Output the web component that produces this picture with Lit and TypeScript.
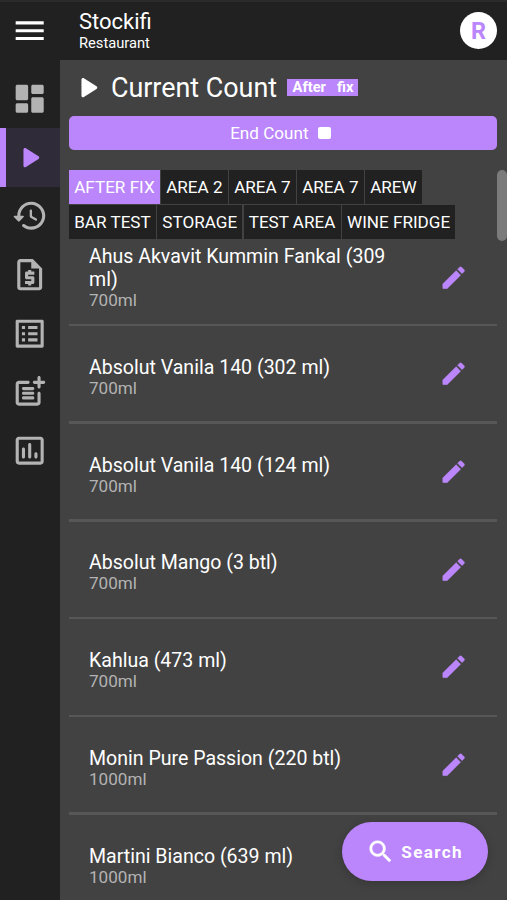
import { LitElement, html, css, svg } from "lit";
import { customElement, property } from "lit/decorators.js";
import { classMap } from "lit/directives/class-map.js";

const ICONS: Record<string, string> = {
  menu: "M3 18h18v-2H3v2zm0-5h18v-2H3v2zm0-7v2h18V6H3z",
  dashboard:
    "M4 13h6c.55 0 1-.45 1-1V4c0-.55-.45-1-1-1H4c-.55 0-1 .45-1 1v8c0 .55.45 1 1 1zm0 8h6c.55 0 1-.45 1-1v-4c0-.55-.45-1-1-1H4c-.55 0-1 .45-1 1v4c0 .55.45 1 1 1zm10 0h6c.55 0 1-.45 1-1v-8c0-.55-.45-1-1-1h-6c-.55 0-1 .45-1 1v8c0 .55.45 1 1 1zM13 4v4c0 .55.45 1 1 1h6c.55 0 1-.45 1-1V4c0-.55-.45-1-1-1h-6c-.55 0-1 .45-1 1z",
  play: "M8 6.82v10.36c0 .79.87 1.27 1.54.84l8.14-5.18c.62-.39.62-1.29 0-1.69L9.54 5.98C8.87 5.55 8 6.03 8 6.82z",
  history:
    "M13.26 3C8.17 2.86 4 6.95 4 12H2.21c-.45 0-.67.54-.35.85l2.79 2.8c.2.2.51.2.71 0l2.79-2.8c.31-.31.09-.85-.36-.85H6c0-3.9 3.18-7.05 7.1-7 3.72.05 6.85 3.18 6.9 6.9.05 3.91-3.1 7.1-7 7.1-1.61 0-3.1-.55-4.28-1.48-.4-.31-.96-.28-1.32.08-.42.42-.39 1.13.08 1.49C9 20.29 10.91 21 13 21c5.05 0 9.14-4.17 9-9.26-.13-4.69-4.05-8.61-8.74-8.74zm-.51 5c-.41 0-.75.34-.75.75v3.68c0 .35.19.68.49.86l3.12 1.85c.36.21.82.09 1.03-.26.21-.36.09-.82-.26-1.03l-2.88-1.71v-3.4c0-.4-.34-.74-.75-.74z",
  quote:
    "M14 2H6c-1.1 0-2 .9-2 2v16c0 1.1.89 2 1.99 2H18c1.1 0 2-.9 2-2V8l-6-6zm4 18H6V4h7v4h5v12zM11 19h2v-1h1c.55 0 1-.45 1-1v-3c0-.55-.45-1-1-1h-3v-1h4v-2h-2V9h-2v1h-1c-.55 0-1 .45-1 1v3c0 .55.45 1 1 1h3v1H9v2h2v1z",
  list: "M19 5v14H5V5h14m1.1-2H3.9c-.5 0-.9.4-.9.9v16.2c0 .4.4.9.9.9h16.2c.4 0 .9-.5.9-.9V3.9c0-.5-.5-.9-.9-.9zM11 7h6v2h-6V7zm0 4h6v2h-6v-2zm0 4h6v2h-6v-2zM7 7h2v2H7V7zm0 4h2v2H7v-2zm0 4h2v2H7v-2z",
  postAdd:
    "M17 19H5V7h6c.55 0 1-.45 1-1s-.45-1-1-1H5c-1.1 0-2 .9-2 2v12c0 1.1.9 2 2 2h12c1.1 0 2-.9 2-2v-6c0-.55-.45-1-1-1s-1 .45-1 1v6zM19 3c0-.55-.45-1-1-1s-1 .45-1 1v2h-2c-.55 0-1 .45-1 1s.45 1 1 1h2v2c0 .55.45 1 1 1s1-.45 1-1V7h2c.55 0 1-.45 1-1s-.45-1-1-1h-2V3zM8 9h6c.55 0 1 .45 1 1s-.45 1-1 1H8c-.55 0-1-.45-1-1s.45-1 1-1zM8 12h6c.55 0 1 .45 1 1s-.45 1-1 1H8c-.55 0-1-.45-1-1s.45-1 1-1zM8 15h6c.55 0 1 .45 1 1s-.45 1-1 1H8c-.55 0-1-.45-1-1s.45-1 1-1z",
  chart:
    "M19 3H5c-1.1 0-2 .9-2 2v14c0 1.1.9 2 2 2h14c1.1 0 2-.9 2-2V5c0-1.1-.9-2-2-2zm0 16H5V5h14v14zM8 10c.55 0 1 .45 1 1v5c0 .55-.45 1-1 1s-1-.45-1-1v-5c0-.55.45-1 1-1zM12 7c.55 0 1 .45 1 1v8c0 .55-.45 1-1 1s-1-.45-1-1V8c0-.55.45-1 1-1zM16 13c.55 0 1 .45 1 1v2c0 .55-.45 1-1 1s-1-.45-1-1v-2c0-.55.45-1 1-1z",
  edit: "M3 17.46v3.04c0 .28.22.5.5.5h3.04c.13 0 .26-.05.35-.15L17.81 9.94l-3.75-3.75L3.15 17.1c-.1.1-.15.22-.15.36zM20.71 7.04c.39-.39.39-1.02 0-1.41l-2.34-2.34c-.39-.39-1.02-.39-1.41 0l-1.83 1.83 3.75 3.75 1.83-1.83z",
  search:
    "M15.5 14h-.79l-.28-.27C15.41 12.59 16 11.11 16 9.5 16 5.91 13.09 3 9.5 3S3 5.91 3 9.5 5.91 16 9.5 16c1.61 0 3.09-.59 4.23-1.57l.27.28v.79l5 4.99L20.49 19l-4.99-5zm-6 0C7.01 14 5 11.99 5 9.5S7.01 5 9.5 5 14 7.01 14 9.5 11.99 14 9.5 14z",
};

@customElement("ui-icon")
export class UiIcon extends LitElement {
  @property() name = "menu";
  static styles = css`
    :host { display: block; width: 37.4px; height: 37.4px; flex: none; }
    .glyph { display: block; width: 100%; height: 100%; fill: currentColor; stroke: currentColor; stroke-width: var(--icon-stroke, 0); }
  `;
  render() {
    return html`<svg class="glyph" viewBox="0 0 24 24">${svg`<path fill-rule="evenodd" d=${ICONS[this.name]}></path>`}</svg>`;
  }
}

@customElement("app-root")
export class AppRoot extends LitElement {
  nav = ["dashboard", "play", "history", "quote", "list", "postAdd", "chart"];
  areas = [
    ["AFTER FIX", "AREA 2", "AREA 7", "AREA 7", "AREW"],
    ["BAR TEST", "STORAGE", "TEST AREA", "WINE FRIDGE"],
  ];
  items = [
    ["Ahus Akvavit Kummin Fankal (309 ml)", "700ml"],
    ["Absolut Vanila 140 (302 ml)", "700ml"],
    ["Absolut Vanila 140 (124 ml)", "700ml"],
    ["Absolut Mango (3 btl)", "700ml"],
    ["Kahlua (473 ml)", "700ml"],
    ["Monin Pure Passion (220 btl)", "1000ml"],
    ["Martini Bianco (639 ml)", "1000ml"],
  ];

  static styles = css`
    :host {
      display: flex; flex-direction: column; position: relative;
      width: 507px; height: 900px; overflow: hidden; box-sizing: border-box;
      background: #424242; color: #fff; font-family: Roboto, sans-serif;
    }
    .header {
      display: flex; align-items: center; height: 60px; flex: none; box-sizing: border-box;
      background: #212121; border-top: 2px solid #2b2b2b; padding: 0 10px 0 11.3px;
    }
    .header ui-icon, .avatar { margin-top: -1px; }
    .brand { flex: 1; margin-left: 30.3px; }
    .name { font-size: 22px; line-height: 24.5px; }
    .kind { font-size: 14.7px; line-height: 17px; }
    .avatar {
      width: 37px; height: 37px; border-radius: 50%; background: #fff; color: #bb86fc;
      display: flex; align-items: center; justify-content: center;
      font-size: 23.5px; font-weight: 700;
    }
    .body { display: flex; flex: 1; min-height: 0; }
    .rail { width: 60px; flex: none; background: #212121; padding-top: 9.3px; box-sizing: border-box; color: #b3b3b3; }
    .nav { height: 58.67px; display: flex; align-items: center; justify-content: center; box-sizing: border-box; padding-left: 0.3px; }
    .nav.active {
      background: #302b38; color: #bb86fc; border-left: 6px solid #bb86fc; padding: 0 5.7px 0 0;
    }
    .main { flex: 1; min-width: 0; display: flex; flex-direction: column; padding: 0 0 0 9.2px; }
    .title { display: flex; align-items: center; height: 56px; flex: none; }
    .heading { font-size: 26.9px; margin-left: 4.6px; white-space: nowrap; line-height: 32px; margin-top: -1px; }
    .title ui-icon { margin-left: -0.3px; }
    .badge {
      margin-left: 10.4px; width: 71px; height: 17px; background: #bb86fc; box-sizing: border-box;
      display: flex; gap: 11px; justify-content: center; align-items: center; margin-top: -1px;
      font-size: 14.7px; font-weight: 700; line-height: 17px;
    }
    .end {
      height: 34px; margin-right: 10px; border-radius: 5px; background: #bb86fc; flex: none;
      display: flex; align-items: center; justify-content: center; gap: 9.5px; font-size: 17.1px;
      padding-right: 5px; box-sizing: border-box;
    }
    .stop { width: 13px; height: 12.5px; border-radius: 2px; background: #fff; }
    .scroll { margin-top: 20px; display: flex; flex: 1; min-height: 0; }
    .content { flex: 1; min-width: 0; overflow: hidden; }
    .thumb { width: 10px; height: 71px; border-radius: 5px; background: #7b7b7b; flex: none; }
    .areas { display: flex; height: 35.2px; }
    .area {
      height: 34.2px; box-sizing: border-box; padding: 0 5.2px 0 5px; background: #212121;
      display: flex; align-items: center; font-size: 17.1px; white-space: nowrap;
      margin-right: 1.4px;
    }
    .area.active { background: #bb86fc; }
    .list { margin-top: -12px; }
    .item {
      height: 97.75px; box-sizing: border-box; display: flex; flex-direction: column;
    }
    .row { flex: 1; display: flex; align-items: center; padding: 0 29.2px 0 19.8px; }
    .text { flex: 1; min-width: 0; padding: 6px 45px 0 0; }
    .item:first-child .text { padding-top: 3px; }
    .item:first-child .pencil { margin-top: 3px; }
    .label { font-size: 19.56px; line-height: 23px; }
    .size { font-size: 17.1px; line-height: 19px; color: #b3b3b3; }
    .pencil { width: 29.3px; height: 29.3px; color: #bb86fc; --icon-stroke: 0.2; }
    .rule { height: 2.5px; background: #575757; }
    .search {
      position: absolute; right: 19.5px; bottom: 19px; width: 145.5px; height: 59px;
      border-radius: 29.5px; background: #bb86fc; box-shadow: 0 2px 9px rgba(0, 0, 0, 0.2);
      display: flex; align-items: center; justify-content: center; gap: 5.5px;
      font-size: 17.1px; font-weight: 700; letter-spacing: 1.4px; box-sizing: border-box;
    }
    .lens { width: 29.3px; height: 29.3px; --icon-stroke: 0.35; }
  `;

  render() {
    return html`
      <div class="header">
        <ui-icon name="menu"></ui-icon>
        <div class="brand">
          <div class="name">Stockifi</div>
          <div class="kind">Restaurant</div>
        </div>
        <div class="avatar">R</div>
      </div>
      <div class="body">
        <div class="rail">
          ${this.nav.map(
            (n) => html`<div class=${classMap({ nav: true, active: n === "play" })}><ui-icon name=${n}></ui-icon></div>`
          )}
        </div>
        <div class="main">
          <div class="title">
            <ui-icon name="play"></ui-icon>
            <div class="heading">Current Count</div>
            <div class="badge"><span>After</span><span>fix</span></div>
          </div>
          <div class="end"><span>End Count</span><span class="stop"></span></div>
          <div class="scroll">
            <div class="content">
              ${this.areas.map(
                (line, i) => html`<div class="areas">
                  ${line.map((a, j) => html`<div class=${classMap({ area: true, active: i + j === 0 })}>${a}</div>`)}
                </div>`
              )}
              <div class="list">
                ${this.items.map(
                  ([label, size]) => html`<div class="item">
                    <div class="row">
                      <div class="text">
                        <div class="label">${label}</div>
                        <div class="size">${size}</div>
                      </div>
                      <ui-icon class="pencil" name="edit"></ui-icon>
                    </div>
                    <div class="rule"></div>
                  </div>`
                )}
              </div>
            </div>
            <div class="thumb"></div>
          </div>
        </div>
      </div>
      <div class="search"><ui-icon class="lens" name="search"></ui-icon><span>Search</span></div>
    `;
  }
}
